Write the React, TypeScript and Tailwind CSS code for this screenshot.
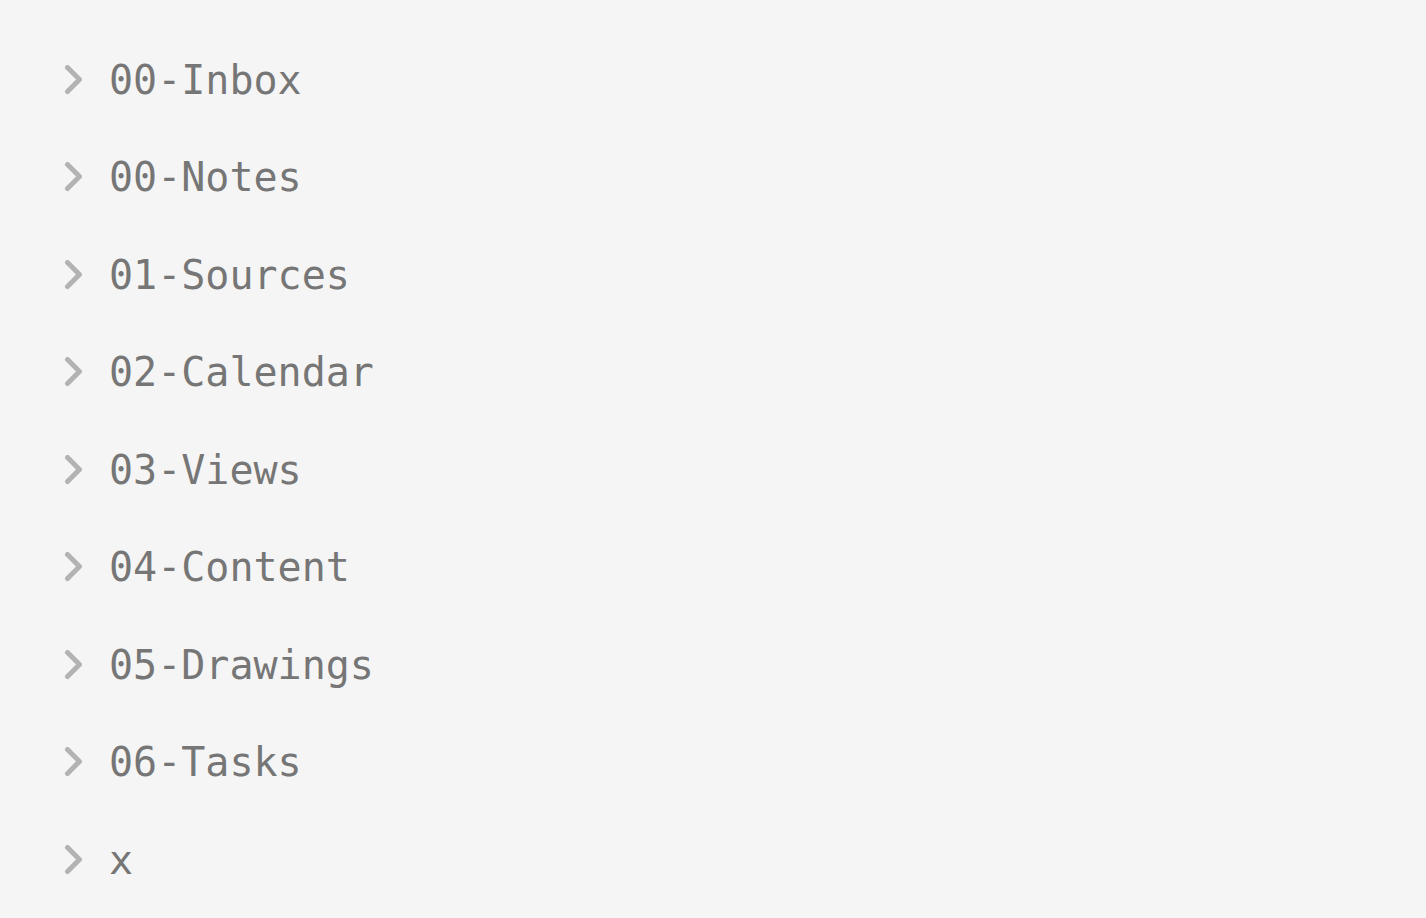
import React from "react";

const items = [
  "00-Inbox",
  "00-Notes",
  "01-Sources",
  "02-Calendar",
  "03-Views",
  "04-Content",
  "05-Drawings",
  "06-Tasks",
  "x",
];

export default function App() {
  return (
    <div className="w-[1426px] h-[918px] bg-[#f5f5f5] overflow-hidden pt-[31px] pl-[62px]">
      <div className="flex flex-col">
        {items.map((name) => (
          <div key={name} className="flex items-center h-[97.5px]">
            <svg width="24" height="30" viewBox="0 0 24 30" className="shrink-0">
              <polyline
                points="5.5,2.5 17.5,14.5 5.5,26.5"
                fill="none"
                stroke="#b3b3b3"
                strokeWidth="5"
                strokeLinecap="round"
                strokeLinejoin="round"
              />
            </svg>
            <span
              className="ml-[23px] text-[40px] leading-none text-[#767676]"
              style={{ fontFamily: '"DejaVu Sans Mono", "Liberation Mono", monospace' }}
            >
              {name}
            </span>
          </div>
        ))}
      </div>
    </div>
  );
}
